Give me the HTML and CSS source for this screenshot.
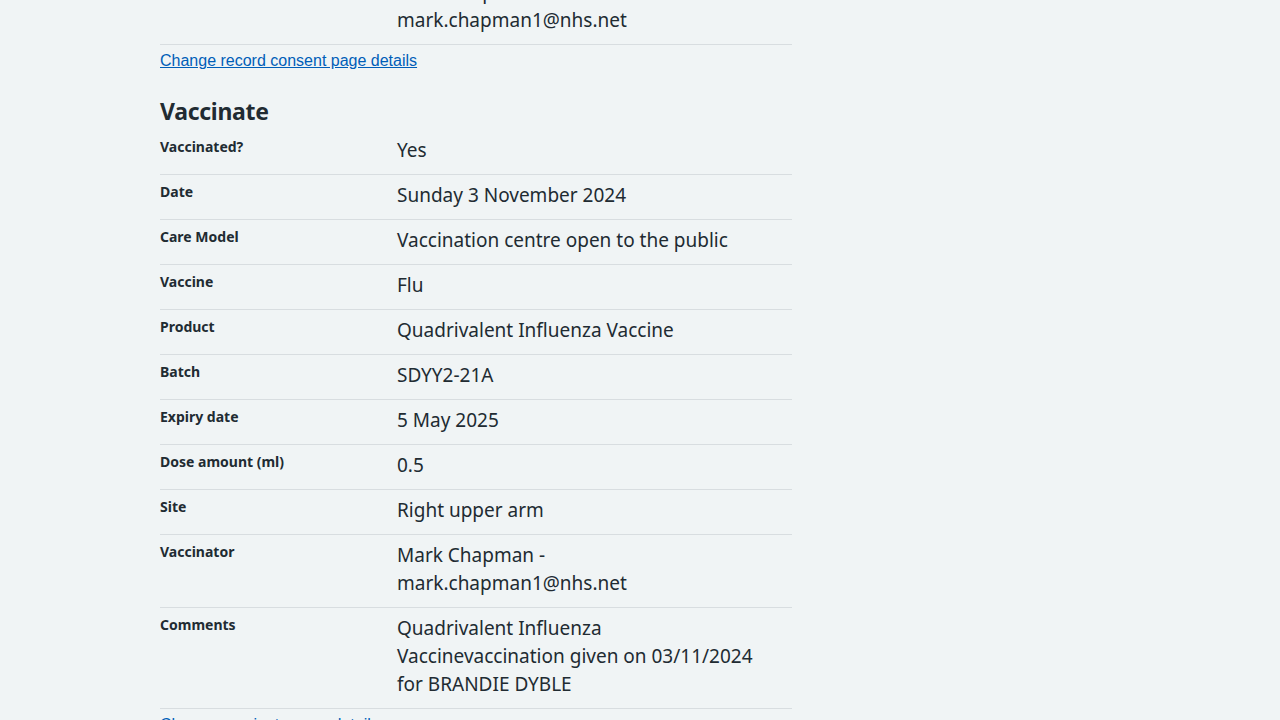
FILE: index.html
```html
<!DOCTYPE html>
<html lang="en">
<head>
<meta charset="utf-8">
<title>Check and confirm</title>
<link rel="stylesheet" href="styles.css">
</head>
<body>
<main class="page">
  <dl class="summary">
    <div class="row">
      <dt class="key">Vaccinator</dt>
      <dd class="value">Mark Chapman - mark.chapman1@nhs.net</dd>
    </div>
  </dl>
  <p class="change"><a href="#">Change record consent page details</a></p>

  <h2 class="heading">Vaccinate</h2>
  <dl class="summary">
    <div class="row"><dt class="key">Vaccinated?</dt><dd class="value">Yes</dd></div>
    <div class="row"><dt class="key">Date</dt><dd class="value">Sunday 3 November 2024</dd></div>
    <div class="row"><dt class="key">Care Model</dt><dd class="value">Vaccination centre open to the public</dd></div>
    <div class="row"><dt class="key">Vaccine</dt><dd class="value">Flu</dd></div>
    <div class="row"><dt class="key">Product</dt><dd class="value">Quadrivalent Influenza Vaccine</dd></div>
    <div class="row"><dt class="key">Batch</dt><dd class="value">SDYY2-21A</dd></div>
    <div class="row"><dt class="key">Expiry date</dt><dd class="value">5 May 2025</dd></div>
    <div class="row"><dt class="key">Dose amount (ml)</dt><dd class="value">0.5</dd></div>
    <div class="row"><dt class="key">Site</dt><dd class="value">Right upper arm</dd></div>
    <div class="row"><dt class="key">Vaccinator</dt><dd class="value">Mark Chapman - mark.chapman1@nhs.net</dd></div>
    <div class="row"><dt class="key">Comments</dt><dd class="value">Quadrivalent Influenza Vaccinevaccination given on 03/11/2024 for BRANDIE DYBLE</dd></div>
  </dl>
  <p class="change"><a href="#">Change vaccinate page details</a></p>
</main>
</body>
</html>
```

FILE: styles.css
```css
html, body {
  margin: 0;
  padding: 0;
  background: #f0f4f5;
  color: #212b32;
  font-family: "Noto Sans", "Liberation Sans", sans-serif;
}

.page {
  width: 632px;
  margin: -28px 0 0 160px;
}

.summary {
  margin: 0;
  padding: 0;
}

.row {
  display: grid;
  grid-template-columns: 237px 1fr;
  border-bottom: 1px solid #d8dde0;
}

.key {
  margin: 0;
  padding: 7px 16px 8px 0;
  font-size: 14px;
  font-weight: 700;
  line-height: 20px;
}

.value {
  margin: 0;
  padding: 6px 24px 10px 0;
  font-size: 19px;
  line-height: 28px;
}

.change {
  margin: 0;
  padding-top: 2px;
  font-family: "Liberation Sans", Arial, sans-serif;
  font-size: 16px;
  line-height: 28px;
}

.change a {
  color: #005eb8;
  text-decoration: underline;
}

.heading {
  margin: 20px 0 3px;
  font-size: 23px;
  font-weight: 700;
  line-height: 32px;
  letter-spacing: -0.3px;
}
```
